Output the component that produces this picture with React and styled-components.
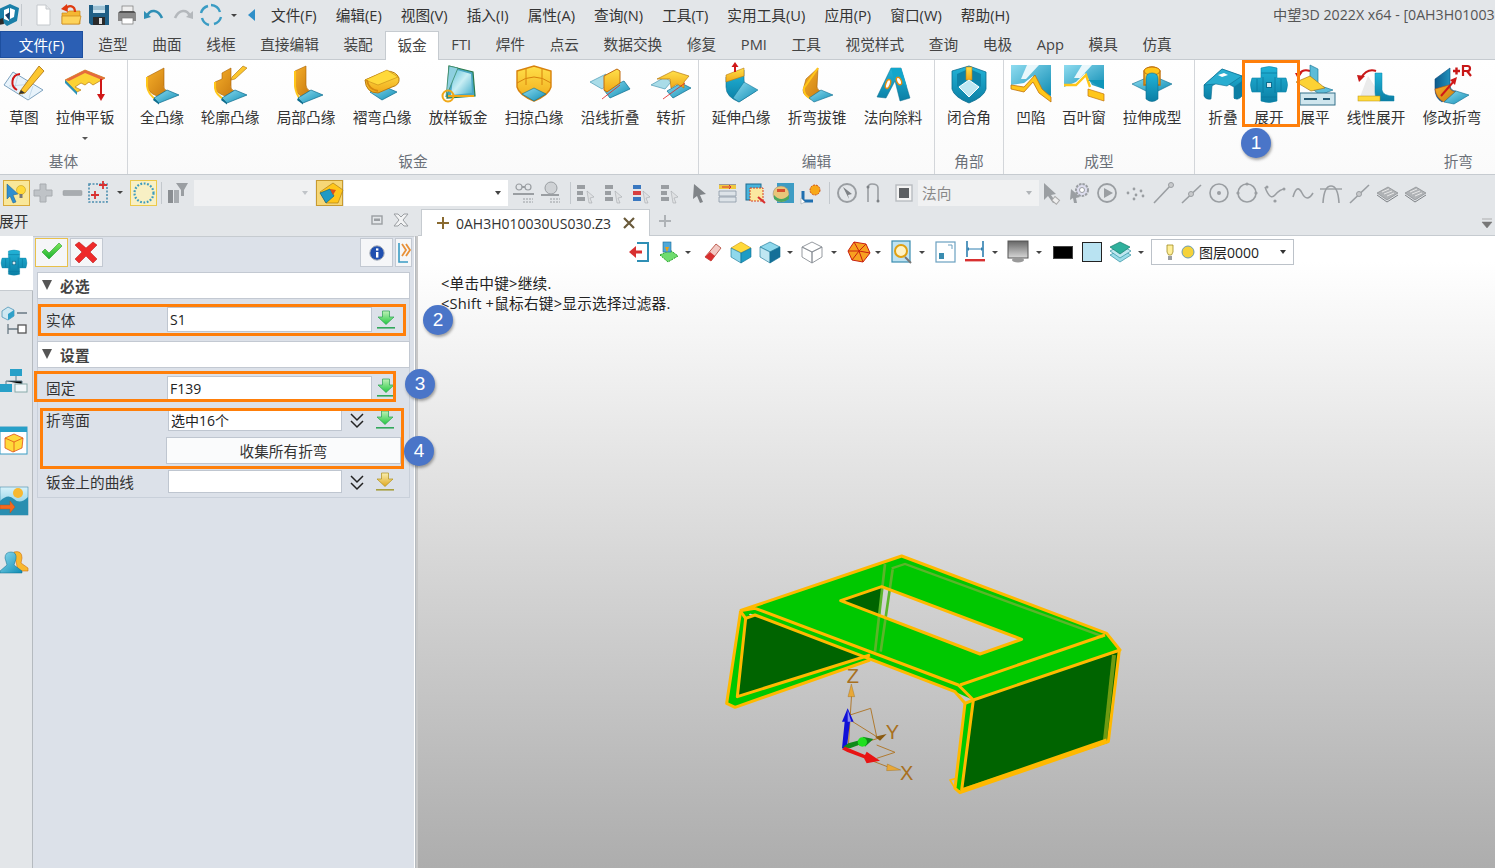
import React from 'react';
import styled, { createGlobalStyle } from 'styled-components';

const FONT = `"Open Sans", "Noto Sans CJK SC", sans-serif`;
const Global = createGlobalStyle`
  html, body { margin: 0; padding: 0; background: #e3e6e9; overflow: hidden; }
  #root { width: 1495px; height: 868px; }
  * { box-sizing: border-box; }
`;

const Page = styled.div`
  position: relative; width: 1495px; height: 868px; overflow: hidden;
  background: #e3e6e9; font-family: ${FONT}; font-size: 14.67px; color: #333;
  display: flex; flex-direction: column;
`;
const DefsHolder = styled.svg`position: absolute; width: 0; height: 0;`;
const IconSvg = styled.svg`display: block; flex: none; overflow: visible;`;

const TitleBar = styled.div`height: 30px; display: flex; align-items: center; flex: none; position: relative; white-space: nowrap;`;
const Slot = styled.div`
  flex: none; margin-left: ${p => p.$ml || 0}px; width: ${p => p.$w}px;
  display: flex; align-items: center; justify-content: center;
`;
const MenuList = styled.div`display: flex; gap: 19.1px; margin-left: 15px;`;
const MenuItem = styled.span`line-height: 30px; color: #333;`;
const WindowTitle = styled.div`margin-left: auto; width: 222px; overflow: hidden; line-height: 30px; color: #555; font-size: 14.2px;`;
const Caret = styled.i`
  display: block; width: 0; height: 0; border-left: ${p => p.$s || 3.5}px solid transparent; border-right: ${p => p.$s || 3.5}px solid transparent;
  border-top: ${p => p.$s || 4}px solid ${p => p.$c || '#444'};
`;

const TabBar = styled.div`height: 29px; flex: none; display: flex; align-items: flex-end; white-space: nowrap;`;
const FileTab = styled.div`
  width: 83px; height: 27px; margin-right: 3px; margin-bottom: 1px; background: #2b5fb4; border: 1px solid #1d4f9f; color: #fff;
  display: flex; align-items: center; justify-content: center; padding-bottom: 1px;
`;
const Tab = styled.div`
  height: 28px; padding: 0 12.32px 3px; display: flex; align-items: center; color: #444; position: relative;
  ${p => p.$active && `background:#fff; border:1px solid #c6cbd0; border-bottom:none; padding: 0 11.32px 3px; z-index:1; height: 29px; margin-bottom: -1px;`}
`;

const Ribbon = styled.div`
  height: 116px; flex: none; display: flex; background: linear-gradient(#fff, #fafafa);
  border-top: 1px solid #c6cbd0; border-bottom: 1px solid #c6cbd0;
`;
const Group = styled.div`
  width: ${p => p.$w}px; flex: none; display: flex; flex-direction: column; position: relative;
  padding-left: ${p => p.$pl || 0}px; padding-top: 5px;
  border-right: ${p => p.$last ? 'none' : '1px solid #d3d6da'}; 
`;
const GroupItems = styled.div`display: flex; flex: 1;`;
const GroupLabel = styled.div`
  height: 27px; line-height: 29px; color: #6a7078; font-size: 14.67px; margin-left: -${p => p.$pl || 0}px;
  display: flex; justify-content: ${p => p.$end ? 'flex-end' : 'center'}; padding-right: ${p => p.$end ? 22 : 0}px;
`;
const RibbonItem = styled.div`
  width: ${p => p.$w}px; flex: none; display: flex; flex-direction: column; align-items: center; white-space: nowrap; color: #333;
`;
const RibbonLabel = styled.span`line-height: 20px; margin-top: 2px;`;
const DropMark = styled.div`margin-top: 10px;`;

const ToolStrip = styled.div`height: 33px; flex: none; display: flex; align-items: center; padding-left: 3px; padding-top: 2px;`;
const ToggleBtn = styled.div`
  flex: none; width: 27px; height: 26px; margin-left: ${p => p.$ml || 0}px; background: ${p => p.$bg || '#f9e79a'};
  border: 1px solid ${p => p.$b || '#d9a93a'}; display: flex; align-items: center; justify-content: center;
`;
const ToolSep = styled.div`flex: none; width: 1px; height: 22px; background: #c3c8cd; margin-left: ${p => p.$ml}px;`;
const Combo = styled.div`
  flex: none; width: ${p => p.$w}px; height: 26px; margin-left: ${p => p.$ml || 0}px; background: ${p => p.$bg || '#f0f1f2'};
  display: flex; align-items: center; justify-content: space-between; padding: 0 7px 0 4px; color: #888; font-size: 14.67px;
`;

const Workspace = styled.div`flex: 1; display: grid; grid-template-columns: 418px 1fr; min-height: 0;`;
const LeftColumn = styled.div`display: flex; flex-direction: column; min-height: 0;`;
const PanelTitle = styled.div`height: 28px; flex: none; display: flex; align-items: center; padding: 0 9px 4px 0; margin-left: -1px;`;
const PanelTitleText = styled.span`flex: 1; color: #333;`;
const PanelBodyRow = styled.div`flex: 1; display: flex; min-height: 0;`;
const Strip = styled.div`width: 33px; flex: none; border-right: 1px solid #b5babf; display: flex; flex-direction: column; border-top: 1px solid #c6cbd0;`;
const StripActive = styled.div`height: 55px; background: #fff; margin-right: -1px; display: flex; align-items: center; border-bottom: 1px solid #c6cbd0; padding-left: 0; position: relative; margin-top: -1px;`;
const StripCell = styled.div`height: 60px; display: flex; align-items: center; padding-left: 0; overflow: hidden;`;
const Panel = styled.div`
  flex: 1; background: #dce1e9; border-right: 1px solid #fff; border-top: 1px solid #c6cbd0; padding: 1px 2px 0 2px;
  box-shadow: 1px 0 0 #b5babf, 3px 0 0 #c8c8c8;
  margin-right: 4px;
`;
const ActionRow = styled.div`height: 29px; display: flex;`;
const ActionBtn = styled.div`
  width: ${p => p.$w || 33}px; height: 29px; margin-left: ${p => p.$ml || 0}px; margin-right: ${p => p.$mr || 0}px; background: #f5f6f8;
  border: 1px solid ${p => p.$b || '#c3c9d2'}; display: flex; align-items: center; justify-content: center;
`;
const Form = styled.div`margin: 5px 2px 0 2px; border: 1px solid #c9d0da; border-top: none; width: 373px; height: 226px; display: flex; flex-direction: column;`;
const SectionHead = styled.div`
  height: 27px; flex: none; margin: ${p => p.$mt || 0}px -1px 0; background: #fff; border: 1px solid #c3c9d2;
  display: flex; align-items: center; padding: 0 0 1px 4px; font-weight: 700; color: #444; letter-spacing: .3px;
`;
const Tri = styled.i`display: block; width: 0; height: 0; border-left: 5.5px solid transparent; border-right: 5.5px solid transparent; border-top: 10px solid #555; margin-right: 8px;`;
const Row = styled.div`
  display: flex; align-items: ${p => p.$top ? 'flex-start' : 'center'}; margin-top: ${p => p.$mt}px; height: ${p => p.$h}px; flex: none;
`;
const RowLabel = styled.div`width: 129px; flex: none; padding-left: 8px; color: #333; padding-bottom: 1px;`;
const Input = styled.div`
  width: ${p => p.$w}px; height: 100%; flex: none; background: #fff; border: 1px solid #bfc6d0; padding-left: 2px; margin-left: ${p => p.$ml || 0}px;
  display: flex; align-items: center; color: #222; font-size: 14px;
`;
const RowAction = styled.div`width: ${p => p.$w}px; flex: none; display: flex; justify-content: center;`;
const WideBtn = styled.div`
  width: 235px; height: 100%; margin-left: -1px; background: #fafbfc; border: 1px solid #bfc6d0; color: #333;
  display: flex; align-items: center; justify-content: center; padding-bottom: 1px; flex: none;
`;

const RightColumn = styled.div`display: flex; flex-direction: column; min-height: 0; position: relative;`;
const DocTabs = styled.div`height: 28px; flex: none; display: flex; align-items: flex-end; padding-left: 3px; border-bottom: 1px solid #c6cbd0; position: relative;`;
const DocTab = styled.div`
  width: 229px; height: 27px; margin-bottom: -1px; background: #fff; border: 1px solid #c6cbd0; border-bottom: none;
  display: flex; align-items: center; padding-left: 15px; color: #333; font-size: 14px; white-space: nowrap;
`;
const DocName = styled.span`margin-left: 7px; flex: none; width: 167px;`;
const AddDoc = styled.div`margin: 0 0 4px 9px; height: 20px; display: flex; align-items: center;`;
const TabScroll = styled.div`margin-left: auto; margin-right: 3px; margin-bottom: 7px;`;
const Viewport = styled.div`flex: 1; position: relative; background: linear-gradient(#fff 0, #fff 4%, #adadad 100%); overflow: hidden;`;
const ViewBar = styled.div`height: 32px; display: flex; align-items: center; padding-left: 211px;`;
const Swatch = styled.div`flex: none; margin-left: ${p => p.$ml}px; width: ${p => p.$w}px; height: ${p => p.$h}px; background: ${p => p.$c}; border: 1px solid ${p => p.$b};`;
const LayerBox = styled.div`
  flex: none; width: 143px; height: 26px; margin-left: 6px; background: #fff; border: 1px solid #bcc2c9; display: flex; align-items: center; padding: 0 7px 0 9px; color: #222; font-size: 14px; gap: 3px;
`;
const LayerName = styled.span`flex: 1;`;
const Prompt = styled.div`padding: 5px 0 0 23px; color: #222; font-size: 14.67px; line-height: 20px; letter-spacing: .22px;`;
const ModelWrap = styled.div`position: absolute; left: 292px; top: 304px;`;

const Highlight = styled.div`
  position: absolute; left: ${p => p.$x}px; top: ${p => p.$y}px; width: ${p => p.$w}px; height: ${p => p.$h}px;
  border: 3px solid #ff7f0a; pointer-events: none;
`;
const Badge = styled.div`
  position: absolute; left: ${p => p.$x - 15}px; top: ${p => p.$y - 15}px; width: 30px; height: 30px; border-radius: 50%;
  background: #4a75c8; color: #fff; display: flex; align-items: center; justify-content: center; font-size: 19px;
  box-shadow: 1px 2px 3px rgba(0,0,0,.35); font-family: "Liberation Sans", sans-serif;
`;

/* ------- drawings ------- */
const O = 'url(#gO)', B = 'url(#gB)', BD = 'url(#gD)', Y = 'url(#gY)';
const flangeBase = (
  <>
    <path d="M25 25L37 30 17 38 12 33Z" fill={B} stroke="#0b6c8e" strokeWidth=".7" />
    <path d="M12 33L17 38 17 39.5 11 35Z" fill="#0b6c8e" />
  </>
);
const R = {
  sketch: <><path d="M0 20L9 7 39 25 24 35Z" fill="#e8f3fb" stroke="#7fa3c0" /><path d="M5 21L30 19M14 10L10 26M22 16L18 31M29 21L25 33" stroke="#b5cfe3" strokeWidth=".7" /><path d="M16 9C7 10 6 21 13 25" fill="none" stroke="#d01818" strokeWidth="2" /><path d="M17 25L35 1 40 6 21 28 15 29Z" fill="#fcc62e" stroke="#a96f0c" strokeWidth=".8" /><path d="M15 29L17 25 21 28Z" fill="#333" /></>,
  extrude: <><path d="M0 15L20 5 40 13 28 20 24 17 20 20 16 18 10 22 16 25 12 27Z" fill="#fcd234" stroke="#b87a10" strokeWidth=".7" /><path d="M0 15L20 5 40 13 37 15 20 8 4 16Z" fill="#e56a3c" /><path d="M0 15L12 27 12 30 0 18Z" fill="#2b93b8" /><path d="M36 14V30" stroke="#d01818" strokeWidth="2" /><path d="M32 29H40L36 36Z" fill="#d01818" /></>,
  full: <><path d="M5 12L22 3V20Q21 24 25 26L15 31Q6 28 5 20Z" fill={O} stroke="#a85f00" strokeWidth=".6" /><path d="M5 12V21Q6 30 15 35" fill="none" stroke="#ffc61a" strokeWidth="2" />{flangeBase}</>,
  contour: <><path d="M5 17L12 14V8L21 3V20Q20 24 24 26L15 31Q6 28 5 22Z" fill={O} stroke="#a85f00" strokeWidth=".6" /><path d="M5 17V23Q6 30 15 35" fill="none" stroke="#ffc61a" strokeWidth="2" />{flangeBase}<path d="M22 12L33 1 37 3 25 14 21 15Z" fill="#fcc62e" stroke="#a96f0c" strokeWidth=".6" /></>,
  partial: <><path d="M9 6L20 1V20Q20 24 24 26L15 31Q9 28 9 20Z" fill={O} stroke="#a85f00" strokeWidth=".6" /><path d="M9 6V21Q10 30 15 35" fill="none" stroke="#ffc61a" strokeWidth="2" />{flangeBase}</>,
  hem: <><path d="M8 24L21 18 35 24 20 32Z" fill={B} stroke="#0b6c8e" strokeWidth=".7" transform="translate(0 3)" /><path d="M3 15L24 6Q34 6 37 13Q38 20 30 22L16 28Q4 28 3 15Z" fill={Y} stroke="#b87a10" /><path d="M3 15L25 5 36 12 16 20Z" fill="#ffd93a" stroke="#b87a10" strokeWidth=".5" /><path d="M5 15Q6 24 16 26" stroke="#d68810" strokeWidth="2" fill="none" /></>,
  loft: <><path d="M11 1L35 7 37 31 9 33Z" fill="#4aa7c4" stroke="#2a7a4a" strokeWidth="1.2" /><path d="M16 4L33 9 34 28 13 30Z" fill="url(#gG)" /><path d="M11 1L20 3 8 32Z" fill="#8ed0e0" stroke="#3a8a6a" strokeWidth=".8" /><circle cx="10" cy="31" r="5.5" fill="none" stroke="#f0a818" strokeWidth="2" /><path d="M10 31L36 31" stroke="#f0a818" strokeWidth="2" /></>,
  sweep: <><path d="M3 6L20 1 37 6V22Q35 30 20 36Q5 30 3 22Z" fill={Y} stroke="#d8820c" strokeWidth="1.4" /><path d="M12 3L12 20M28 3L28 20M3 18Q20 6 37 18" stroke="#d8820c" strokeWidth="1" fill="none" /><path d="M8 29L20 23 32 29 20 36Z" fill={B} stroke="#0b6c8e" strokeWidth=".6" /></>,
  alongline: <><path d="M0 17L16 9V21L12 24Z" fill="#a9dce8" stroke="#4a9ab4" strokeWidth=".7" /><path d="M14 25L34 16 40 24 20 33Z" fill={B} stroke="#0b6c8e" strokeWidth=".7" /><path d="M14 11L27 4 30 6V18L17 27 14 25Z" fill={Y} stroke="#c06a10" /><path d="M12 34L30 20" stroke="#e02020" strokeWidth=".8" /></>,
  jog: <><path d="M0 20L14 12 20 17 14 24Z" fill="#a9dce8" stroke="#4a9ab4" strokeWidth=".7" /><path d="M16 26L30 18 40 23 22 33Z" fill={B} stroke="#0b6c8e" strokeWidth=".7" /><path d="M6 14L22 6 38 11 33 17V23L26 19 20 23 19 14Z" fill={Y} stroke="#b87a10" strokeWidth=".7" /><path d="M12 34L34 18" stroke="#e02020" strokeWidth=".8" /></>,
  extend: <><path d="M5 12L23 5V14Q22 22 35 26L18 37Q5 32 5 22Z" fill={BD} stroke="#0b6c8e" strokeWidth=".6" /><path d="M5 10L23 3 23 11 5 17Z" fill={Y} stroke="#b87a10" strokeWidth=".6" /><path d="M14 7V0" stroke="#d01818" strokeWidth="2" /><path d="M10.5 2L14 -3 17.5 2Z" fill="#d01818" /><path d="M23 17L37 25 18 37 12 33Z" fill={B} stroke="#0b6c8e" strokeWidth=".5" /></>,
  taper: <><path d="M9 14L21 3 20 22Q20 25 25 27L17 34Q6 32 6 25Z" fill={O} stroke="#a85f00" strokeWidth=".6" /><path d="M21 3L7 23Q6 30 14 34" fill="none" stroke="#ffc61a" strokeWidth="2" /><path d="M24 25L36 30 17 37 12 33Z" fill={B} stroke="#0b6c8e" strokeWidth=".6" /></>,
  cut: <><path d="M4 32L18 3 28 3 37 33 27 36 22 16 13 33Z" fill={BD} stroke="#0b6c8e" strokeWidth=".5" /><path d="M18 3L28 3 34 22 27 16 21 15Z" fill="#12a6cb" /><ellipse cx="15" cy="19" rx="2.2" ry="4.6" fill="#fff" stroke="#e68a10" strokeWidth="1.4" transform="rotate(20 15 19)" /><ellipse cx="26" cy="16" rx="2.2" ry="4" fill="#fff" stroke="#e68a10" strokeWidth="1.4" transform="rotate(-25 26 16)" /></>,
  corner: <><path d="M3 6L20 1 37 7V24Q35 32 20 38Q5 32 3 24Z" fill={BD} stroke="#0b6c8e" strokeWidth=".8" /><path d="M8 9L17 5V16L8 22ZM32 9L23 5V16L32 22Z" fill="#0e83a8" /><path d="M17 2H23V15H17Z" fill={Y} stroke="#c08010" strokeWidth=".6" /><path d="M20 15L30 22 20 32 10 22Z" fill="#bfe7f2" stroke="#fff" /></>,
  dimple: <><path d="M0 0H40V31L29 26 22 11 13 18 0 20Z" fill={B} /><path d="M16 0L28 0 15 14 10 14Z" fill="#e9f7fb" /><path d="M0 20L13 22 24 10 31 24 40 32V37L28 28 22 17 13 27 0 24Z" fill="#ffc61a" stroke="#c2720c" strokeWidth=".8" /></>,
  louver: <><path d="M0 0H40V24L28 20 21 8 12 17 0 22Z" fill={B} /><path d="M18 0L28 0 16 13 10 13Z" fill="#e9f7fb" /><path d="M0 20L12 20 22 10 26 22" fill="none" stroke="#ffc61a" strokeWidth="2.4" /><path d="M24 24L40 29V36L24 31Z" fill="#ffc61a" stroke="#c2720c" strokeWidth=".7" /><path d="M24 15H40V24Z" fill="#0f96ba" /></>,
  drawn: <><path d="M0 19L14 13H26L40 19 26 26H14Z" fill={B} stroke="#0b6c8e" strokeWidth=".6" /><path d="M12 6Q20 -2 28 6V20H12Z" fill={Y} stroke="#c2720c" strokeWidth="1.4" /><ellipse cx="20" cy="6" rx="8" ry="4" fill="#ffc61a" stroke="#c2720c" /><path d="M14 14Q14 8 20 8Q26 8 26 14V34Q20 39 14 34Z" fill={BD} stroke="#0b6c8e" strokeWidth=".6" /></>,
  fold: <><path d="M1 20L19 4 39 11V31Q35 36 31 33V22L18 15 9 21 8 34Q3 35 1 31Z" fill={BD} stroke="#0b6c8e" strokeWidth=".6" /><path d="M1 20L19 4 39 11 24 21 13 19Z" fill="#29add0" stroke="#0b6c8e" strokeWidth=".6" /><path d="M15 10L21 8 25 10 19 12Z" fill="#fff" /><path d="M31 22V34L39 31V16Z" fill="#0d7ea3" /></>,
  unfold: <><path d="M12 3Q20 0 28 3V13H37Q40 20 37 27H28V36Q20 39 12 36V27H3Q0 20 3 13H12Z" fill={BD} stroke="#0b84a8" strokeWidth=".6" /><path d="M12 8H28M12 32H28M8 14V26M32 14V26M14 12V28M26 12V28" stroke="#0878a0" strokeWidth=".8" /><rect x="17.5" y="17.5" width="5" height="5" fill="#d8e8ee" stroke="#0b6c8e" /></>,
  flatten: <><path d="M3 12Q6 3 15 6" fill="none" stroke="#d01818" strokeWidth="2" /><path d="M0 8H7L3 14Z" fill="#d01818" /><path d="M15 0L23 4V20L38 25 25 30 15 22Z" fill="#5dbcd8" stroke="#0b6c8e" strokeWidth=".6" /><path d="M1 17L15 11 30 23 16 26Z" fill="#fcd234" stroke="#a06a0c" strokeWidth=".6" /><rect x="5" y="28" width="35" height="12" fill="#cfe6ee" stroke="#34708a" /><path d="M9 34H22M28 34H35" stroke="#255a76" strokeWidth="2" /></>,
  linear: <><path d="M5 13Q11 3 20 6" fill="none" stroke="#c81818" strokeWidth="2" /><path d="M1 10L9 11 3 17Z" fill="#c81818" /><path d="M12 12L26 33H4Z" fill="#d8d8d8" transform="translate(0 -1)" opacity=".5" /><path d="M26 8V25Q27 31 38 31V36H24Q19 35 19 27V8Z" fill={BD} stroke="#0b84a8" strokeWidth=".5" /><rect x="2" y="31" width="22" height="5" fill="#ffd93a" stroke="#b89010" strokeWidth=".5" /></>,
  modify: <><path d="M3 14L18 3V21Q19 26 24 26L10 37Q3 33 3 24Z" fill="url(#gN)" stroke="#0b4c7e" strokeWidth=".6" /><path d="M3 24Q4 33 12 37L24 27Q17 26 17 20Z" fill={O} stroke="#c04a10" strokeWidth=".6" /><path d="M24 26L37 30 22 39 12 37Z" fill={B} stroke="#0b6c8e" strokeWidth=".6" /><path d="M9 31L22 16" stroke="#d01818" strokeWidth="2" /><path d="M18 15L25 12 23 20Z" fill="#d01818" /><path d="M21 6H28M24.5 2.5V9.5" stroke="#c81818" strokeWidth="2.4" /><path d="M31 11V1H35.5Q38 1 38 3.5Q38 6 35.5 6H31M35 6L39 11" fill="none" stroke="#c81818" strokeWidth="2.2" /></>,
};
const RIcon = ({ n, s = 40 }) => <IconSvg width={s} height={s} viewBox="0 0 40 40">{R[n]}</IconSvg>;

const G = '#9a9ea2', G2 = '#7d8185';
const S = {
  logo: <><path d="M2 6L13 1 22 5 20 18 10 23 3 17Z" fill="#1b7fa8" /><path d="M7 7L12 5V18L7 16ZM13 5L18 7 17 14 13 16Z" fill="#fff" /><path d="M8 12L13 9 12 17Z" fill="#1a3d66" /><path d="M0 17L6 15 7 21 2 22Z" fill="#2a2a2a" /></>,
  doc: <><path d="M6 2H15L19 6V22H6Z" fill="#fff" stroke="#c4c8cc" /><path d="M15 2V6H19" fill="#e6e8ea" stroke="#c4c8cc" /></>,
  open: <><path d="M3 10H8L10 8H21V21H3Z" fill="#f5b733" stroke="#c8871a" strokeWidth=".7" /><path d="M3 13H22L20 21H3Z" fill="#fdd35a" stroke="#c8871a" strokeWidth=".7" /><path d="M7 6C10 1 16 3 16 9" fill="none" stroke="#e03a10" strokeWidth="2.2" /><path d="M2 6L8 1 9 9Z" fill="#e03a10" /></>,
  save: <><path d="M2 2H22V22H4L2 20Z" fill="#1f5f86" /><rect x="6" y="2" width="12" height="8" fill="#cfe6f2" /><path d="M6 4H18M6 6H18" stroke="#6a9ab4" /><rect x="6" y="14" width="12" height="8" fill="#2a2a2a" /><rect x="12" y="15" width="3" height="6" fill="#ddd" /></>,
  print: <><rect x="7" y="3" width="11" height="7" fill="#eee" stroke="#777" strokeWidth=".7" /><path d="M3 10H21V18H3Z" fill="#8a8a8a" /><path d="M3 10H21L19 8H5Z" fill="#555" /><rect x="7" y="15" width="11" height="6" fill="#fff" stroke="#777" strokeWidth=".7" /></>,
  undo: <><path d="M5 13C8 6 16 6 20 15" fill="none" stroke="#2f8fb5" strokeWidth="2.6" /><path d="M2 8L9 14 2 16Z" fill="#2f8fb5" /></>,
  redo: <><path d="M19 13C16 6 8 6 4 15" fill="none" stroke="#b4b8bc" strokeWidth="2.6" /><path d="M22 8L15 14 22 16Z" fill="#b4b8bc" /></>,
  refresh: <><path d="M12 2A10 10 0 0 1 21 9M22 14A10 10 0 0 1 15 21M10 22A10 10 0 0 1 3 15M2 10A10 10 0 0 1 9 3" fill="none" stroke="#3a9cc4" strokeWidth="2.4" /></>,
  selcur: <><path d="M2 3L13 13 8 14 11 21 8 22 5 15 2 18Z" fill="#2f8fd0" stroke="#1a5a90" strokeWidth=".5" /><circle cx="16" cy="9" r="4.5" fill="#ffd93a" stroke="#b89010" strokeWidth=".5" /><rect x="14.5" y="13" width="3" height="4" fill="#777" /></>,
  plus: <path d="M9 3H15V9H21V15H15V21H9V15H3V9H9Z" fill="#bfc3c7" stroke="#a8acb0" />,
  minus: <rect x="3" y="9.5" width="19" height="5" rx="1" fill="#a8acb0" stroke="#94989c" strokeWidth=".5" />,
  crop: <><rect x="2" y="3" width="18" height="18" fill="none" stroke="#4d8fb0" strokeWidth="1.6" strokeDasharray="2 1.5" /><path d="M16 0V8M12 4H20M8 10V18M4 14H12" stroke="#d83030" strokeWidth="1.8" /></>,
  circ: <circle cx="12" cy="12" r="9.5" fill="none" stroke="#3d9cc0" strokeWidth="2.2" strokeDasharray="1.8 1.6" />,
  filter: <><rect x="2" y="9" width="5" height="13" fill="#8a8e92" /><rect x="8" y="9" width="5" height="13" fill="#a8acb0" /><path d="M10 2H22L18 9V15H15V9Z" fill="#9a9ea2" /></>,
  shape: <><path d="M2 11L15 2 25 9 20 22 8 22Z" fill="#ffc61a" stroke="#a07010" strokeWidth=".6" /><path d="M2 12L12 8 16 15 8 22Z" fill="#1f9ac4" stroke="#0b5c7e" strokeWidth=".6" /><path d="M12 8L18 9 15 14Z" fill="#e05018" /></>,
  link: <><circle cx="8" cy="6" r="3" fill="none" stroke={G} strokeWidth="1.2" /><circle cx="17" cy="6" r="3" fill="none" stroke={G} strokeWidth="1.2" /><path d="M11 6H14M2 13H23" stroke={G} strokeWidth="2" /><path d="M12 18H22M12 21H22" stroke={G} strokeDasharray="2 1" /></>,
  gauge: <><circle cx="12" cy="7" r="6" fill="#cfd2d5" stroke={G} /><path d="M2 14H20" stroke={G} strokeWidth="2" /><path d="M11 18H21M11 21H21" stroke={G} strokeDasharray="2 1" /></>,
  list1: <><path d="M3 4H11V8H3ZM3 10H9V14H3ZM3 16H11V20H3Z" fill={G} /><path d="M13 10L20 16 16 17 18 22 15 22Z" fill="#dfe1e3" stroke={G} strokeWidth=".5" /></>,
  list2: <><path d="M3 4H11V8H3ZM3 16H11V20H3Z" fill="#3a78c0" /><path d="M3 10H11V14H3Z" fill="#d84040" /><path d="M13 10L20 16 16 17 18 22 15 22Z" fill="#dfe1e3" stroke={G} strokeWidth=".5" /></>,
  arrow: <path d="M7 3L19 13 13 14 16 21 13 22 10 15 6 18Z" fill="#808488" />,
  rows: <><rect x="4" y="3" width="17" height="5" fill="#f0c840" /><rect x="4" y="3" width="17" height="1" fill="#999" /><path d="M7 6H16L14 4M16 6L14 8" stroke="#d83030" fill="none" /><path d="M4 10H21V15H4ZM4 16H21V21H4Z" fill="#dde3e8" stroke="#8a98a4" strokeWidth=".8" /></>,
  book: <><rect x="3" y="3" width="15" height="16" fill="#48b4dc" stroke="#1f6a90" /><rect x="7" y="7" width="13" height="13" fill="#fbe8a0" stroke="#d84020" strokeDasharray="2 1" /><path d="M15 16L22 22" stroke="#d83030" strokeWidth="2" /></>,
  globe: <><rect x="6" y="2" width="17" height="20" fill="#3d9cc4" /><circle cx="10" cy="13" r="8" fill="#e8c67a" stroke="#888" strokeWidth=".5" /><path d="M3 14Q10 22 18 14V18Q10 24 3 18Z" fill="#4aa860" /><path d="M6 8H14V11H6Z" fill="#d85030" /></>,
  gear: <><path d="M4 10V20H14" fill="none" stroke="#1f6fb0" strokeWidth="3" /><circle cx="16" cy="9" r="5" fill="#f8a818" stroke="#d05010" strokeDasharray="2 1" /><path d="M2 17L6 21 2 23Z" fill="#fff" stroke="#8a9aa4" strokeWidth=".5" /></>,
  compass: <><circle cx="12" cy="12" r="9" fill="none" stroke={G} strokeWidth="2" /><path d="M8 6L17 13 13 14 14 18Z" fill={G2} /></>,
  hook: <><path d="M6 21V7Q6 3 10 3Q16 3 16 7V20" fill="none" stroke={G} strokeWidth="1.6" /><circle cx="6" cy="6" r="1.5" fill={G2} /><circle cx="16" cy="20" r="1.5" fill={G2} /></>,
  stop: <><rect x="5" y="4" width="16" height="16" fill="#f4f4f4" stroke="#b8bcc0" strokeWidth="1.4" /><rect x="8" y="7" width="10" height="10" fill="#5c5f62" /></>,
  cur2: <><path d="M5 2L17 13 12 14 17 21 14 22 9 15 5 19Z" fill="#9a9ea2" /><rect x="14" y="17" width="6" height="5" fill="#eee" stroke="#aaa" transform="rotate(40 17 19)" /></>,
  gearc: <><path d="M4 8L13 16 9 17 10 22 7 22 6 17 3 19Z" fill={G} /><circle cx="15" cy="9" r="6" fill="#dde" stroke={G} strokeWidth="2" strokeDasharray="2.5 1" /><circle cx="15" cy="9" r="2.5" fill="#fff" stroke={G} /></>,
  play: <><circle cx="12" cy="12" r="9" fill="none" stroke={G} strokeWidth="1.8" /><path d="M9 7L18 12 9 17Z" fill={G} /></>,
  dots: <><circle cx="5" cy="12" r="1.4" fill={G} /><circle cx="11" cy="8" r="1.4" fill={G} /><circle cx="13" cy="14" r="1.4" fill={G} /><circle cx="18" cy="10" r="1.4" fill={G} /><circle cx="20" cy="15" r="1.4" fill={G} /><circle cx="11" cy="18" r="1.4" fill={G} /></>,
  line: <><path d="M3 22L20 4" stroke={G} strokeWidth="1.6" /><circle cx="20" cy="4" r="2.5" fill="#c8cacc" stroke={G} /></>,
  mline: <><path d="M3 22L22 4" stroke={G} strokeWidth="1.6" /><circle cx="12" cy="13" r="2.5" fill="#c8cacc" stroke={G} /></>,
  ccirc: <><circle cx="12" cy="12" r="9" fill="none" stroke={G} strokeWidth="1.6" /><circle cx="12" cy="12" r="2" fill={G} /></>,
  tcirc: <><circle cx="12" cy="12" r="9" fill="none" stroke={G} strokeWidth="1.6" /><circle cx="3" cy="12" r="1.6" fill={G} /><circle cx="21" cy="12" r="1.6" fill={G} /><circle cx="12" cy="3" r="1.6" fill={G} /></>,
  spline: <><path d="M2 6Q7 20 12 14T22 8" fill="none" stroke={G} strokeWidth="1.5" /><circle cx="4" cy="6" r="1.5" fill={G} /><circle cx="12" cy="20" r="1.6" fill={G} /><circle cx="21" cy="8" r="1.5" fill={G} /></>,
  wave: <path d="M2 16Q6 2 11 12T22 12" fill="none" stroke={G} strokeWidth="1.6" />,
  arc: <><path d="M4 22Q5 5 12 5T20 22" fill="none" stroke={G} strokeWidth="1.6" /><path d="M1 8H23" stroke={G} strokeWidth="1.4" /></>,
  plane: <><path d="M2 12L13 6 23 12 12 19Z" fill="#b0b3b6" stroke={G2} strokeWidth=".6" /><path d="M7 11L14 8M9 13L17 10M12 15L19 12" stroke="#e8e8e8" /><path d="M2 14L12 21 23 14" fill="none" stroke={G2} /></>,
  exit: <><path d="M9 3H20V21H9" fill="none" stroke="#2f8fb5" strokeWidth="2" /><path d="M14 12H6" stroke="#d83030" strokeWidth="3" /><path d="M8 6V18L1 12Z" fill="#d83030" /></>,
  view: <><path d="M4 15L14 10 22 16 12 22Z" fill="#6fdc6f" stroke="#22a022" strokeDasharray="2 1" /><rect x="7" y="2" width="8" height="10" fill="#4fa8d8" stroke="#176a96" strokeWidth=".6" /><path d="M9 7L13 7 11 12Z" fill="#e8a018" /></>,
  eraser: <><path d="M3 17L14 4 19 8 9 21Z" fill="#f2c9c4" stroke="#b04030" strokeWidth=".8" /><path d="M3 17L8 12 13 16 9 21Z" fill="#d83030" /></>,
  ycube: <><path d="M12 2L22 8 12 13 2 8Z" fill="#ffd93a" stroke="#c89010" strokeWidth=".6" /><path d="M2 8L12 13V23L2 17Z" fill="#8fd8ec" stroke="#0f6f90" strokeWidth=".6" /><path d="M22 8L12 13V23L22 17Z" fill="#1e9cc4" stroke="#0f6f90" strokeWidth=".6" /></>,
  bcube: <><path d="M12 2L22 7 12 12 2 7Z" fill="#8fd8ec" stroke="#0f6f90" strokeWidth=".6" /><path d="M2 7L12 12V23L2 17Z" fill="#bfe7f2" stroke="#0f6f90" strokeWidth=".6" /><path d="M22 7L12 12V23L22 17Z" fill="#146f98" stroke="#0f6f90" strokeWidth=".6" /></>,
  wcube: <><path d="M12 2L22 7 12 12 2 7ZM2 7L12 12V23L2 17ZM22 7L12 12V23L22 17Z" fill="#fff" stroke="#8a9096" strokeWidth=".9" /></>,
  poly: <><path d="M7 2L19 4 23 13 16 22 5 20 1 11Z" fill="#f8a020" stroke="#c82010" /><path d="M7 2L12 11 19 4M1 11L12 11 23 13M12 11L5 20M12 11L16 22" stroke="#c82010" fill="none" /></>,
  zoomf: <><rect x="2" y="1" width="18" height="21" fill="#bfe3f2" stroke="#3a8cb0" strokeWidth="1.2" /><circle cx="11" cy="11" r="6" fill="#fff3c4" stroke="#e0a010" strokeWidth="2" /><path d="M15 17L21 23" stroke="#777" strokeWidth="2" /></>,
  fit: <><rect x="2" y="2" width="19" height="20" fill="#fff" stroke="#6aa0c0" strokeWidth="1.2" /><rect x="5" y="13" width="5" height="6" fill="#3a8cb0" /><path d="M14 5H18V9" fill="none" stroke="#6aa0c0" /></>,
  ruler: <><path d="M4 1V17M20 1V17" stroke="#2f7fb0" strokeWidth="1.6" /><path d="M6 9H18" stroke="#2f7fb0" /><path d="M6 7V11L4 9ZM18 7V11L20 9Z" fill="#2f7fb0" /><rect x="2" y="19" width="20" height="2.4" fill="#d83030" /></>,
  monitor: <><rect x="2" y="1" width="20" height="17" fill="url(#gM)" stroke="#555" /><ellipse cx="12" cy="20" rx="6" ry="2.5" fill="#999" /></>,
  layers: <><path d="M2 15L13 9 23 15 12 22Z" fill="#9adce8" stroke="#2f8fa0" strokeWidth=".7" /><path d="M2 11L13 5 23 11 12 18Z" fill="#bfe7f0" stroke="#2f8fa0" strokeWidth=".7" /><path d="M2 7L12 2 22 7 12 14Z" fill="#2fb09c" stroke="#167a6c" strokeWidth=".7" /></>,
  bulb: <><path d="M6 2H12V9L10.5 12H7.5L6 9Z" fill="#ffef9a" stroke="#a08a20" strokeWidth=".8" /><rect x="7" y="13" width="4" height="4" fill="#9a9ea2" /></>,
  sun: <circle cx="8" cy="8" r="6" fill="#f5d23a" stroke="#6a9ab4" />,
  dl: <><path d="M6.5 1H13.5V7H18L10 14.5 2 7H6.5Z" fill="url(#gA)" stroke="#2aa050" strokeWidth=".7" /><rect x="1" y="17" width="18" height="1.6" fill="#32a85c" /></>,
  dly: <><path d="M6.5 1H13.5V7H18L10 14.5 2 7H6.5Z" fill="url(#gC)" stroke="#b09018" strokeWidth=".7" /><rect x="1" y="17" width="18" height="1.6" fill="#a8a040" /></>,
  chev: <path d="M2 2L8 8 14 2M2 9L8 15 14 9" fill="none" stroke="#222" strokeWidth="1.5" />,
  check: <path d="M2 11L5 8 9 12 19 2 22 5 9 18Z" fill="url(#gK)" stroke="#2a9a2a" strokeWidth=".6" />,
  cross: <path d="M4 1L11 7 18 1 22 4 15 11 22 18 18 22 11 15 4 22 0 18 7 11 0 4Z" fill="#ee2a2a" stroke="#b01010" strokeWidth=".5" />,
  info: <><circle cx="8" cy="8" r="7.2" fill="#1f4fb0" stroke="#aab0b8" /><rect x="7" y="7" width="2.4" height="5.6" fill="#fff" /><rect x="7" y="3.4" width="2.4" height="2.2" fill="#fff" /></>,
  next: <><path d="M2 1V20H11" fill="none" stroke="#3a9cc4" strokeWidth="1.6" /><path d="M5 2L9 8 5 14M9 2L13 8 9 14" fill="none" stroke="#e89038" strokeWidth="1.8" /></>,
  restore: <><rect x="1" y="2" width="10" height="8" fill="none" stroke="#9a9ea2" strokeWidth="1.4" /><rect x="3" y="4.5" width="6" height="2.5" fill="#9a9ea2" /></>,
  closex: <path d="M1 1H5L8 4 11 1H15L10 7 15 13H11L8 10 5 13H1L6 7Z" fill="#f2f3f4" stroke="#9a9ea2" />,
  pin: <path d="M5 0H7V5H12V7H7V12H5V7H0V5H5Z" fill="#8a6a30" />,
  xclose: <path d="M1 1L11 11M11 1L1 11" stroke="#6a5a3a" strokeWidth="2.2" />,
  addp: <path d="M5 0H7V5H12V7H7V12H5V7H0V5H5Z" fill="#aeb2b6" />,
  scroll: <path d="M0 0H10L5 6Z M0 -3H10" fill="#777" stroke="#777" strokeWidth=".5" />,
  tree: <><path d="M2 6L8 2 14 5 14 11 8 15 2 12Z" fill="#cfe8f2" stroke="#3a8ab0" strokeWidth=".7" /><path d="M8 9L14 5V11L8 15Z" fill="#2fa0c8" /><path d="M17 8H27M8 24H18M8 19V29" stroke="#6a7a84" strokeWidth="1.3" /><rect x="18" y="20" width="8" height="8" fill="#fff" stroke="#555" strokeWidth="1.3" /></>,
  hier: <><rect x="10" y="1" width="12" height="7" fill="#28a0c8" /><path d="M16 8V13M6 13H22V16M6 13V16" stroke="#5a7a8a" /><rect x="0" y="16" width="12" height="8" fill="#28a0c8" /><rect x="15" y="16" width="12" height="8" fill="#f2f6f8" stroke="#8aa" /></>,
  winbox: <><rect x="0" y="1" width="27" height="27" fill="#fff" stroke="#3a9cc4" /><rect x="0" y="1" width="27" height="5" fill="#28a0c8" /><path d="M14 8L23 12 22 22 13 26 5 22 5 12Z" fill="#ffd93a" stroke="#e05018" strokeWidth=".8" /><path d="M5 12L14 16 23 12M14 16V26" stroke="#e05018" strokeWidth=".8" fill="none" /></>,
  picture: <><rect x="0" y="1" width="28" height="28" fill="url(#gP)" stroke="#2a7a9a" strokeWidth=".5" /><circle cx="18" cy="7" r="5" fill="#f8b830" /><path d="M0 15Q8 7 14 13T28 11V29H0Z" fill="#2a8eb0" /><path d="M0 19H10V15L15 21 10 27V23H0Z" fill="#f56a1e" stroke="#c04a10" strokeWidth=".4" /></>,
  users: <><path d="M14 4Q22 2 22 10L21 15 28 20V23H18Z" fill="#f8b830" stroke="#d07010" strokeWidth=".6" /><path d="M5 10Q5 4 11 4Q17 4 16 11L14 17 22 23V25H0V23L7 17Z" fill="url(#gB)" stroke="#0b6c8e" strokeWidth=".5" /></>,
};
const SIcon = ({ n, w = 24, h = 24, vb }) => <IconSvg width={w} height={h} viewBox={vb || `0 0 ${w} ${h}`}>{S[n]}</IconSvg>;

const Defs = () => (
  <DefsHolder aria-hidden="true">
    <defs>
      <linearGradient id="gO" x1="0" y1="0" x2="1" y2="1"><stop offset="0" stopColor="#f7b02a" /><stop offset="1" stopColor="#c87a10" /></linearGradient>
      <linearGradient id="gY" x1="0" y1="0" x2="0" y2="1"><stop offset="0" stopColor="#ffe04a" /><stop offset="1" stopColor="#f0a818" /></linearGradient>
      <linearGradient id="gB" x1="0" y1="0" x2="1" y2="1"><stop offset="0" stopColor="#8fdcf0" /><stop offset="1" stopColor="#0f8db4" /></linearGradient>
      <linearGradient id="gD" x1="0" y1="0" x2="0" y2="1"><stop offset="0" stopColor="#22b4d8" /><stop offset="1" stopColor="#0b7ea4" /></linearGradient>
      <linearGradient id="gN" x1="0" y1="0" x2="1" y2="0"><stop offset="0" stopColor="#0e5a8c" /><stop offset="1" stopColor="#2aa8cf" /></linearGradient>
      <linearGradient id="gG" x1="0" y1="0" x2="1" y2="1"><stop offset="0" stopColor="#5ac0d8" /><stop offset=".5" stopColor="#c8eef4" /><stop offset="1" stopColor="#4ab0cc" /></linearGradient>
      <linearGradient id="gM" x1="0" y1="0" x2="0" y2="1"><stop offset="0" stopColor="#666" /><stop offset="1" stopColor="#d8d8d8" /></linearGradient>
      <linearGradient id="gA" x1="0" y1="0" x2="0" y2="1"><stop offset="0" stopColor="#bff2b8" /><stop offset="1" stopColor="#22c840" /></linearGradient>
      <linearGradient id="gC" x1="0" y1="0" x2="0" y2="1"><stop offset="0" stopColor="#f8eeb0" /><stop offset="1" stopColor="#e0a820" /></linearGradient>
      <linearGradient id="gK" x1="0" y1="0" x2="0" y2="1"><stop offset="0" stopColor="#7ee85a" /><stop offset="1" stopColor="#18b030" /></linearGradient>
      <linearGradient id="gP" x1="0" y1="0" x2="0" y2="1"><stop offset="0" stopColor="#d8f2fa" /><stop offset="1" stopColor="#68c0dc" /></linearGradient>
    </defs>
  </DefsHolder>
);

const EDGE = '#ffb900';
const ModelDrawing = () => (
  <IconSvg width={430} height={270} viewBox="0 0 1290 810">
    {/* left panel */}
    <path d="M100 225L135 225 490 358 85 472Z" fill="#006400" />
    <path d="M90 212L135 205 107 235 85 470 480 345 480 360 75 502 50 490Z" fill="#00c800" />
    {/* right panel */}
    <path d="M790 480L1225 335 1195 605 755 750Z" fill="#006400" />
    <path d="M765 488L790 478 757 752 735 748Z" fill="#00c800" />
    <path d="M755 745L1195 600 1195 608 745 758Z" fill="#3e9a20" />
    <path d="M1212 345L1185 600" stroke="#6f9a10" strokeWidth="12" />
    {/* top */}
    <path fillRule="evenodd" d="M90 212L575 48 1190 280 1230 330 790 480 735 455 135 225ZM392 182L810 342 935 298 515 140Z" fill="#00c800" />
    <path d="M392 182L515 140 510 225Z" fill="#006400" />
    <path d="M525 72L495 335M548 88L512 335" stroke="#5bb52a" strokeWidth="8" fill="none" />
    <path d="M545 85L585 72 1180 290" stroke="#5bb52a" strokeWidth="7" fill="none" />
    {/* edges */}
    <g fill="none" stroke={EDGE} strokeWidth="9" strokeLinejoin="round">
      <path d="M90 212L575 48 1190 280 1230 330 790 480 745 435 135 205 90 212" />
      <path d="M750 435L1185 285" />
      <path d="M392 182L515 140 935 298 810 342Z" />
      <path d="M90 212L107 235 135 225 735 455 765 490 790 480" />
      <path d="M107 235L82 470 480 345" />
      <path d="M92 212L50 490 75 502 480 360" />
      <path d="M765 490L735 745 750 758 1195 605 1228 330" />
      <path d="M790 480L755 750 1190 600" />
      <path d="M735 745L720 720 740 715" strokeWidth="5" />
    </g>
    {/* triad */}
    <g fill="none" stroke="#b07a30" strokeWidth="3">
      <path d="M420 525L482 505 500 590 420 540M500 615L555 637 500 655M415 620L425 460M480 660L545 685M440 615L520 590" />
    </g>
    <path d="M414 470L424 432 434 470Z" fill="#e8a838" stroke="#8a5a10" strokeWidth="1" />
    <path d="M532 672L572 690 530 692Z" fill="#e8a838" stroke="#8a5a10" strokeWidth="1" />
    <path d="M495 590L530 582 510 602Z" fill="#8a5a10" />
    <path d="M396 625L404 545 396 545 413 505 431 545 420 545 410 628Z" fill="#1010d8" />
    <path d="M413 510L424 545H413Z" fill="#8a8af0" />
    <path d="M398 622L415 610 460 598 458 590 490 597 465 620 460 610 420 625Z" fill="#0f8a1a" />
    <circle cx="457" cy="606" r="14" fill="#20e020" />
    <path d="M396 628L405 620 465 645 470 635 510 662 470 670 462 655 412 636Z" fill="#e81414" />
    <g fill="#a87020" fontFamily="Liberation Sans, sans-serif" fontSize="60">
      <text x="410" y="428">Z</text>
      <text x="527" y="598">Y</text>
      <text x="570" y="720">X</text>
    </g>
  </IconSvg>
);

const MENUS = ['文件(F)', '编辑(E)', '视图(V)', '插入(I)', '属性(A)', '查询(N)', '工具(T)', '实用工具(U)', '应用(P)', '窗口(W)', '帮助(H)'];
const TABS = ['造型', '曲面', '线框', '直接编辑', '装配', '钣金', 'FTI', '焊件', '点云', '数据交换', '修复', 'PMI', '工具', '视觉样式', '查询', '电极', 'App', '模具', '仿真'];
const GROUPS = [
  { w: 128, label: '基体', pl: 0, items: [['sketch', '草图', 48], ['extrude', '拉伸平钣', 74, true]] },
  { w: 571, label: '钣金', pl: 4, items: [['full', '全凸缘', 60], ['contour', '轮廓凸缘', 76], ['partial', '局部凸缘', 76], ['hem', '褶弯凸缘', 76], ['loft', '放样钣金', 76], ['sweep', '扫掠凸缘', 76], ['alongline', '沿线折叠', 76], ['jog', '转折', 46]] },
  { w: 236, label: '编辑', pl: 4, items: [['extend', '延伸凸缘', 76], ['taper', '折弯拔锥', 76], ['cut', '法向除料', 76]] },
  { w: 69, label: '角部', pl: 4, items: [['corner', '闭合角', 60]] },
  { w: 191, label: '成型', pl: 3, items: [['dimple', '凹陷', 48], ['louver', '百叶窗', 58], ['drawn', '拉伸成型', 78]] },
  { w: 300, label: '折弯', pl: 5, end: true, last: true, items: [['fold', '折叠', 46], ['unfold', '展开', 46], ['flatten', '展平', 46], ['linear', '线性展开', 76], ['modify', '修改折弯', 76]] },
];
const TB1 = [['list1', 3], ['list1', 4], ['list2', 4], ['list1', 4], ['arrow', 5], ['rows', 4], ['book', 4], ['globe', 4], ['gear', 4]];
const TB2 = ['cur2', 'gearc', 'play', 'dots', 'line', 'mline', 'ccirc', 'tcirc', 'spline', 'wave', 'arc', 'mline', 'plane', 'plane'];
const VB = [['exit', 20, 1], ['view', 22, 7], [null, 8, 5], ['eraser', 18, 13], ['ycube', 22, 7], ['bcube', 24, 6], [null, 8, 4], ['wcube', 24, 6], [null, 8, 6], ['poly', 24, 9], [null, 8, 3], ['zoomf', 22, 9], [null, 8, 5], ['fit', 20, 10], ['ruler', 22, 8], [null, 8, 5], ['monitor', 22, 8], [null, 8, 6]];

const Tool = ({ n, ml, w = 24 }) => <Slot $w={w} $ml={ml}><SIcon n={n} /></Slot>;
const SmallCaret = ({ ml }) => <Slot $w={8} $ml={ml}><Caret $s={3.5} $c="#444" /></Slot>;

export default function App() {
  return (
    <Page>
      <Global />
      <Defs />
      <TitleBar>
        <Tool n="logo" w={24} ml={-3} />
        <ToolSep $ml={0} />
        <Tool n="doc" ml={9} />
        <Tool n="open" ml={4} />
        <Tool n="save" ml={4} />
        <Tool n="print" ml={4} />
        <Tool n="undo" ml={3} />
        <Tool n="redo" ml={5} />
        <Tool n="refresh" ml={4} />
        <SmallCaret ml={7} />
        <Slot $w={8} $ml={10}><svg width="8" height="12" viewBox="0 0 8 12"><path d="M7 0V12L0 6Z" fill="#2f8fc8" /></svg></Slot>
        <MenuList>{MENUS.map(m => <MenuItem key={m}>{m}</MenuItem>)}</MenuList>
        <WindowTitle>中望3D 2022X x64 - [0AH3H010030US030.Z3]</WindowTitle>
      </TitleBar>

      <TabBar>
        <FileTab>文件(F)</FileTab>
        {TABS.map(t => <Tab key={t} $active={t === '钣金'}>{t}</Tab>)}
      </TabBar>

      <Ribbon>
        {GROUPS.map(g => (
          <Group key={g.label} $w={g.w} $pl={g.pl} $last={g.last}>
            <GroupItems>
              {g.items.map(([icon, label, w, drop]) => (
                <RibbonItem key={label} $w={w}>
                  <RIcon n={icon} />
                  <RibbonLabel>{label}</RibbonLabel>
                  {drop && <DropMark><Caret $s={3.5} $c="#555" /></DropMark>}
                </RibbonItem>
              ))}
            </GroupItems>
            <GroupLabel $pl={g.pl} $end={g.end}>{g.label}</GroupLabel>
          </Group>
        ))}
      </Ribbon>

      <ToolStrip>
        <ToggleBtn><SIcon n="selcur" /></ToggleBtn>
        <Tool n="plus" ml={1} />
        <Tool n="minus" ml={5} />
        <Tool n="crop" ml={3} />
        <SmallCaret ml={5} />
        <ToggleBtn $ml={6} $bg="#f8f0c4" $b="#ecc94a"><SIcon n="circ" /></ToggleBtn>
        <ToolSep $ml={4} />
        <Tool n="filter" ml={4} />
        <Combo $w={121} $ml={4}><span /><Caret $c="#c0c4c8" /></Combo>
        <ToggleBtn $ml={1} $bg="#f6d777" $b="#c89a30"><SIcon n="shape" /></ToggleBtn>
        <Combo $w={164} $ml={1} $bg="#fff"><span /><Caret $c="#444" /></Combo>
        <Tool n="link" ml={3} />
        <Tool n="gauge" ml={4} />
        <ToolSep $ml={7} />
        {TB1.map(([n, ml], i) => <Tool key={i} n={n} ml={ml} />)}
        <ToolSep $ml={6} />
        <Tool n="compass" ml={5} />
        <Tool n="hook" ml={3} />
        <Tool n="stop" ml={5} />
        <Combo $w={121} $ml={3}>法向<Caret $c="#b0b4b8" /></Combo>
        {TB2.map((n, i) => <Tool key={i} n={n} ml={i === 0 ? 0 : 4} />)}
      </ToolStrip>

      <Workspace>
        <LeftColumn>
          <PanelTitle>
            <PanelTitleText>展开</PanelTitleText>
            <SIcon n="restore" w={12} h={12} />
            <Slot $w={16} $ml={10}><SIcon n="closex" w={16} h={14} /></Slot>
          </PanelTitle>
          <PanelBodyRow>
            <Strip>
              <StripActive><RIcon n="unfold" s={28} /></StripActive>
              <StripCell><SIcon n="tree" w={28} h={32} /></StripCell>
              <StripCell><SIcon n="hier" w={28} h={26} /></StripCell>
              <StripCell><SIcon n="winbox" w={28} h={30} /></StripCell>
              <StripCell><SIcon n="picture" w={28} h={30} /></StripCell>
              <StripCell><SIcon n="users" w={28} h={26} /></StripCell>
            </Strip>
            <Panel>
              <ActionRow>
                <ActionBtn $b="#e8c04a"><SIcon n="check" /></ActionBtn>
                <ActionBtn $ml={2}><SIcon n="cross" /></ActionBtn>
                <ActionBtn $ml={257} $mr={2}><SIcon n="info" w={16} h={16} /></ActionBtn>
                <ActionBtn $w={17}><SIcon n="next" w={14} h={22} /></ActionBtn>
              </ActionRow>
              <Form>
                <SectionHead><Tri />必选</SectionHead>
                <Row $mt={8} $h={25}>
                  <RowLabel>实体</RowLabel>
                  <Input $w={205}>S1</Input>
                  <RowAction $w={28}><SIcon n="dl" w={20} h={20} /></RowAction>
                </Row>
                <SectionHead $mt={9}><Tri />设置</SectionHead>
                <Row $mt={8} $h={24}>
                  <RowLabel>固定</RowLabel>
                  <Input $w={205}>F139</Input>
                  <RowAction $w={28}><SIcon n="dl" w={20} h={20} /></RowAction>
                </Row>
                <Row $mt={9} $h={22}>
                  <RowLabel>折弯面</RowLabel>
                  <Input $w={174} $ml={1}>选中16个</Input>
                  <RowAction $w={30}><SIcon n="chev" w={16} h={16} /></RowAction>
                  <RowAction $w={26}><SIcon n="dl" w={20} h={20} /></RowAction>
                </Row>
                <Row $mt={6} $h={27}>
                  <RowLabel />
                  <WideBtn>收集所有折弯</WideBtn>
                </Row>
                <Row $mt={6} $h={23}>
                  <RowLabel>钣金上的曲线</RowLabel>
                  <Input $w={174} $ml={1} />
                  <RowAction $w={30}><SIcon n="chev" w={16} h={16} /></RowAction>
                  <RowAction $w={26}><SIcon n="dly" w={20} h={20} /></RowAction>
                </Row>
              </Form>
            </Panel>
          </PanelBodyRow>
        </LeftColumn>

        <RightColumn>
          <DocTabs>
            <DocTab>
              <SIcon n="pin" w={12} h={12} />
              <DocName>0AH3H010030US030.Z3</DocName>
              <SIcon n="xclose" w={12} h={12} />
            </DocTab>
            <AddDoc><SIcon n="addp" w={12} h={12} /></AddDoc>
            <TabScroll><SIcon n="scroll" w={10} h={6} /></TabScroll>
          </DocTabs>
          <Viewport>
            <ViewBar>
              {VB.map(([n, w, ml], i) => n
                ? <Tool key={i} n={n} w={w} ml={ml} />
                : <SmallCaret key={i} ml={ml} />)}
              <Swatch $ml={10} $w={20} $h={13} $c="#000" $b="#444" />
              <Swatch $ml={9} $w={20} $h={20} $c="#b9e3f2" $b="#222" />
              <Tool n="layers" ml={6} />
              <SmallCaret ml={5} />
              <LayerBox>
                <SIcon n="bulb" w={16} h={18} />
                <SIcon n="sun" w={16} h={16} />
                <LayerName>图层0000</LayerName>
                <Caret $c="#333" />
              </LayerBox>
            </ViewBar>
            <Prompt>
              &lt;单击中键&gt;继续.<br />
              &lt;Shift +鼠标右键&gt;显示选择过滤器.
            </Prompt>
            <ModelWrap><ModelDrawing /></ModelWrap>
          </Viewport>
        </RightColumn>
      </Workspace>

      <Highlight $x={1242} $y={60} $w={58} $h={67} />
      <Highlight $x={38} $y={304} $w={368} $h={32} />
      <Highlight $x={34} $y={371} $w={362} $h={31} />
      <Highlight $x={40} $y={408} $w={364} $h={61} />
      <Badge $x={1256} $y={143}>1</Badge>
      <Badge $x={438} $y={320}>2</Badge>
      <Badge $x={420} $y={384}>3</Badge>
      <Badge $x={419} $y={451}>4</Badge>
    </Page>
  );
}
